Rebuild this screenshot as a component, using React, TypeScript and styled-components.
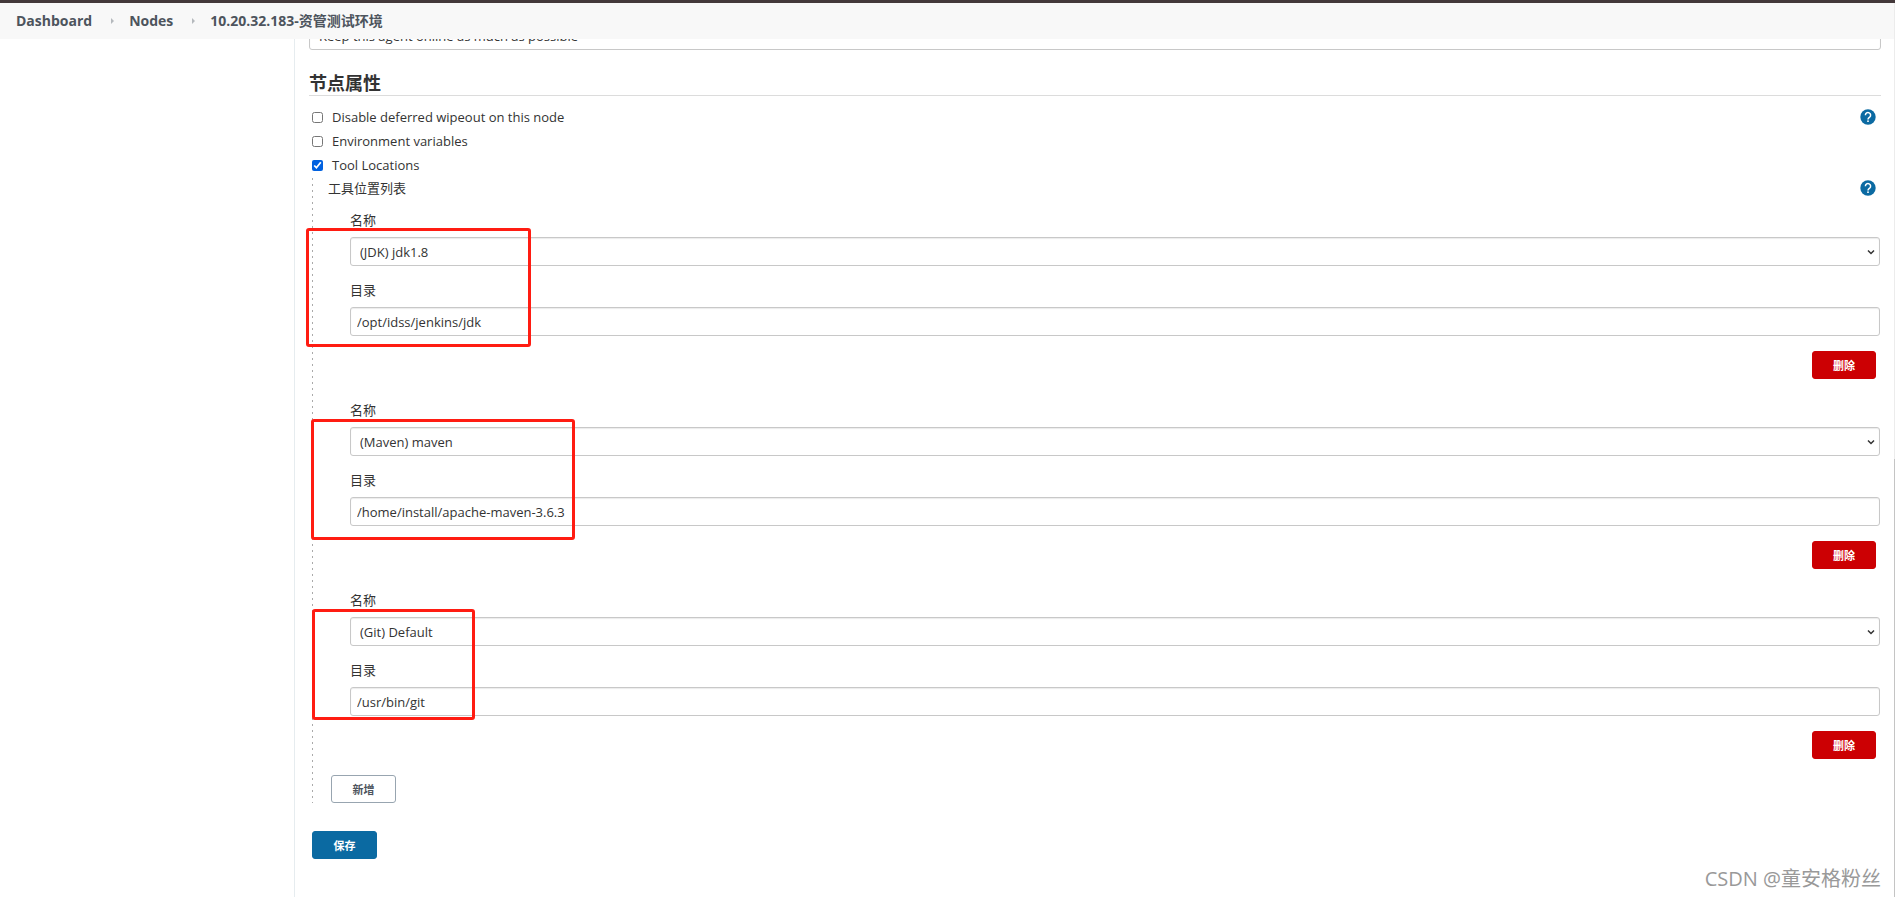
import React, { useState } from "react";
import styled, { createGlobalStyle } from "styled-components";

const GlobalStyle = createGlobalStyle`
  *, *::before, *::after { box-sizing: border-box; }
  body {
    margin: 0;
    background: #fff;
    color: #333;
    font-family: "Open Sans", "Noto Sans CJK SC", sans-serif;
    font-size: 13px;
    line-height: 20px;
  }
  button, input, select { font: inherit; color: inherit; }
`;

const Page = styled.div`
  display: flex;
  flex-direction: column;
  min-height: 100vh;
  position: relative;
  overflow: hidden;
  padding-right: 1px;
`;

const ScrollTrack = styled.div`
  position: absolute;
  z-index: 3;
  top: 3px;
  right: 0;
  bottom: 0;
  width: 1px;
  background: linear-gradient(#ececec 51%, #c4c4c4 51%);
`;

const Header = styled.header`
  position: relative;
  z-index: 2;
  margin-right: -1px;
  border-top: 3px solid #43383a;
  background: #f8f8f8;
`;

const Crumbs = styled.nav`
  display: flex;
  align-items: center;
  height: 36px;
  padding-left: 16px;
`;

const Crumb = styled.a`
  color: #4d545d;
  font-size: 14px;
  font-weight: 700;
  text-decoration: none;
`;

const CrumbArrow = styled.svg`
  width: 3px;
  height: 6px;
  margin: 0 15px 0 19px;
  fill: #b5b9bd;
`;

const Columns = styled.div`
  display: flex;
  flex: 1;
`;

const SidePanel = styled.aside`
  flex: 0 0 295px;
  border-right: 1px solid #e6ecef;
`;

const Main = styled.main`
  flex: 1;
  min-width: 0;
  margin-top: -18px;
  padding: 0 13px 36px 14px;
`;

const control = `
  display: block;
  width: 100%;
  height: 29px;
  border: 1px solid #c8c8c8;
  border-radius: 3px;
  background: #fff;
  box-shadow: inset 0 1px 1px rgba(0, 0, 0, 0.08);
`;

const SelectBox = styled.div`
  position: relative;
`;

const Select = styled.select`
  ${control}
  appearance: none;
  padding: 0 24px 0 9px;
`;

const Chevron = styled.svg`
  position: absolute;
  right: 5px;
  top: 12px;
  width: 8px;
  height: 7px;
  fill: none;
  stroke: #333;
  stroke-width: 1.5;
  pointer-events: none;
`;

const TextInput = styled.input`
  ${control}
  padding: 0 6px;
`;

const SectionTitle = styled.h2`
  margin: 19px 0 9px;
  padding-top: 2px;
  border-bottom: 1px solid #dcdcdc;
  font-size: 18px;
  line-height: 24px;
  font-weight: 700;
`;

const OptionRow = styled.div`
  display: flex;
  align-items: center;
  height: 24px;
  padding: 0 5px 0 3px;
`;

const OptionLabel = styled.label`
  display: flex;
  align-items: center;
  gap: 9px;
  flex: 1;
`;

const Checkbox = styled.input`
  width: 11px;
  height: 11px;
  margin: 0;
  accent-color: #0061e0;
`;

const HelpButton = styled.button`
  display: flex;
  width: 16px;
  height: 16px;
  margin-left: auto;
  margin-right: 0;
  padding: 0;
  border: 0;
  background: none;
`;

const Nested = styled.section`
  margin-left: 3px;
  padding-left: 16px;
  background: repeating-linear-gradient(#fff 0 1px, #aaa 1px 3px, #fff 3px 6px) left top / 1px 100% no-repeat;
`;

const NestedHead = styled.div`
  display: flex;
  align-items: center;
  height: 22px;
  padding-right: 5px;
`;

const Tool = styled.div`
  position: relative;
  height: 190px;
  padding: 11px 1px 0 22px;
`;

const FieldLabel = styled.label`
  display: block;
  margin-bottom: 7px;
`;

const Field = styled.div`
  & + & { margin-top: 14px; }
`;

const Actions = styled.div`
  display: flex;
  justify-content: flex-end;
  padding: 15px 4px 0 0;
`;

const Button = styled.button<{ $kind: "danger" | "plain" | "primary" }>`
  min-width: ${(p) => (p.$kind === "danger" ? 64 : 65)}px;
  height: 28px;
  padding: 1px 0 0;
  border: 1px solid ${(p) => ({ danger: "#cc0003", plain: "#98a5b0", primary: "#0b6aa2" })[p.$kind]};
  border-radius: 3px;
  background: ${(p) => ({ danger: "#cc0003", plain: "#fff", primary: "#0b6aa2" })[p.$kind]};
  color: ${(p) => (p.$kind === "plain" ? "#4d545d" : "#fff")};
  font-size: 11px;
  font-weight: 700;
`;

const AddRow = styled.div`
  padding: 6px 0 0 3px;
`;

const SaveRow = styled.div`
  padding: 28px 0 0;
  margin-left: 3px;
`;

const Highlight = styled.div<{ $left: number; $top: number; $width: number; $height: number }>`
  position: absolute;
  left: ${(p) => p.$left}px;
  top: ${(p) => p.$top}px;
  width: ${(p) => p.$width}px;
  height: ${(p) => p.$height}px;
  border: 3px solid #ff1c12;
  border-radius: 3px;
  pointer-events: none;
`;

const Watermark = styled.div`
  position: absolute;
  right: 14px;
  bottom: 4px;
  color: #999;
  font-size: 20px;
  line-height: 28px;
  text-shadow: 1px 1px 0 #fff;
`;

function Help({ label }: { label: string }) {
  return (
    <HelpButton type="button" aria-label={label}>
      <svg width="16" height="16" viewBox="0 0 16 16">
        <circle cx="8" cy="8" r="7.7" fill="#0b6aa2" />
        <path d="M5.4 6.2a2.6 2.6 0 1 1 4.2 2C8.6 8.9 8 9.2 8 10.4" fill="none" stroke="#fff" strokeWidth="1.5" />
        <rect x="7.2" y="11.4" width="1.6" height="1.6" fill="#fff" />
      </svg>
    </HelpButton>
  );
}

function Arrow() {
  return (
    <CrumbArrow viewBox="0 0 3 6" aria-hidden="true">
      <path d="M0 0L3 3L0 6Z" />
    </CrumbArrow>
  );
}

function DropDown({ id, value, label }: { id: string; value: string; label?: string }) {
  return (
    <SelectBox>
      <Select id={id} aria-label={label}>
        <option>{value}</option>
      </Select>
      <Chevron viewBox="0 0 8 7" aria-hidden="true">
        <path d="M1 1.5L4 4.5L7 1.5" />
      </Chevron>
    </SelectBox>
  );
}

const tools = [
  {
    id: "jdk",
    name: "(JDK) jdk1.8",
    home: "/opt/idss/jenkins/jdk",
    mark: { $left: -22, $top: 29, $width: 225, $height: 119 },
  },
  {
    id: "maven",
    name: "(Maven) maven",
    home: "/home/install/apache-maven-3.6.3",
    mark: { $left: -17, $top: 30, $width: 264, $height: 121 },
  },
  {
    id: "git",
    name: "(Git) Default",
    home: "/usr/bin/git",
    mark: { $left: -16, $top: 30, $width: 163, $height: 111 },
  },
];

const options = ["Disable deferred wipeout on this node", "Environment variables", "Tool Locations"];

export default function App() {
  const [checked, setChecked] = useState([false, false, true]);
  const toggle = (i: number) => setChecked(checked.map((c, n) => (n === i ? !c : c)));

  return (
    <Page>
      <GlobalStyle />
      <Header>
        <Crumbs aria-label="Breadcrumb">
          <Crumb href="#dashboard">Dashboard</Crumb>
          <Arrow />
          <Crumb href="#nodes">Nodes</Crumb>
          <Arrow />
          <Crumb href="#node">10.20.32.183-资管测试环境</Crumb>
        </Crumbs>
      </Header>
      <Columns>
        <SidePanel />
        <Main>
          <DropDown id="availability" label="Availability" value="Keep this agent online as much as possible" />
          <SectionTitle>节点属性</SectionTitle>
          {options.map((text, i) => (
            <OptionRow key={text}>
              <OptionLabel>
                <Checkbox type="checkbox" checked={checked[i]} onChange={() => toggle(i)} />
                {text}
              </OptionLabel>
              {i === 0 && <Help label="Help for node properties" />}
            </OptionRow>
          ))}
          <Nested>
            <NestedHead>
              工具位置列表
              <Help label="Help for tool locations" />
            </NestedHead>
            {tools.map((t) => (
              <Tool key={t.id}>
                <Field>
                  <FieldLabel htmlFor={`${t.id}-name`}>名称</FieldLabel>
                  <DropDown id={`${t.id}-name`} value={t.name} />
                </Field>
                <Field>
                  <FieldLabel htmlFor={`${t.id}-home`}>目录</FieldLabel>
                  <TextInput id={`${t.id}-home`} defaultValue={t.home} />
                </Field>
                <Actions>
                  <Button type="button" $kind="danger">删除</Button>
                </Actions>
                <Highlight {...t.mark} />
              </Tool>
            ))}
            <AddRow>
              <Button type="button" $kind="plain">新增</Button>
            </AddRow>
          </Nested>
          <SaveRow>
            <Button type="submit" $kind="primary">保存</Button>
          </SaveRow>
        </Main>
      </Columns>
      <Watermark>CSDN @童安格粉丝</Watermark>
      <ScrollTrack />
    </Page>
  );
}
